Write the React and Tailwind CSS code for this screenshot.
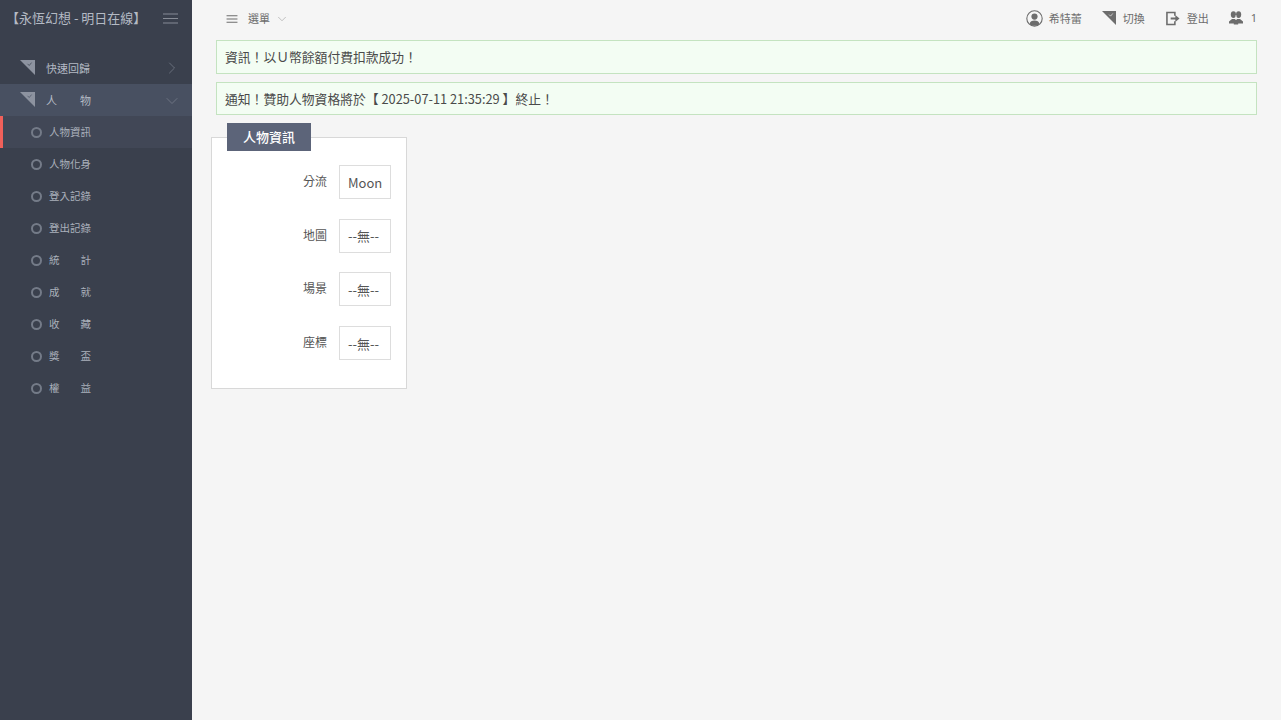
import React from 'react';
import { ChevronRight, ChevronDown } from 'lucide-react';

const FONT = "font-['Noto_Sans_CJK_TC','Noto_Sans',sans-serif]";

const subItems = [
  { a: '人物資訊', active: true },
  { a: '人物化身' },
  { a: '登入記錄' },
  { a: '登出記錄' },
  { a: '統', b: '計' },
  { a: '成', b: '就' },
  { a: '收', b: '藏' },
  { a: '獎', b: '盃' },
  { a: '權', b: '益' },
];

const fields = [
  { label: '分流', value: 'Moon' },
  { label: '地圖', value: '--無--' },
  { label: '場景', value: '--無--' },
  { label: '座標', value: '--無--' },
];

function CornerIcon({ color, tick, className }) {
  return (
    <svg viewBox="0 0 15 15" className={className}>
      <path d="M0 0H15V15Z" fill={color} />
      <path d="M7.5 3.8L9.2 5.5L11.6 2.6" fill="none" stroke={tick} strokeWidth="0.7" />
    </svg>
  );
}

function Bars({ className, stroke, width }) {
  return (
    <svg viewBox="0 0 15 11" className={className}>
      <path d="M0 1H15M0 5.5H15M0 10H15" fill="none" stroke={stroke} strokeWidth={width} />
    </svg>
  );
}

function Sidebar() {
  return (
    <aside className="w-[192px] shrink-0 bg-[#3a404d] flex flex-col">
      <div className="h-[52px] pl-[6px] pr-[14px] pb-[16px] flex items-center justify-between">
        <span className="text-[13px] text-[#b4bac4] whitespace-nowrap">【永恆幻想 - 明日在線】</span>
        <Bars className="w-[15px] h-[11px]" stroke="#9aa0aa" width="0.8" />
      </div>
      <div className="h-[32px] pl-[20px] pr-[10px] flex items-center text-[#b4bac4]">
        <CornerIcon color="#8d93a0" tick="#3a404d" className="w-[15px] h-[15px] -mt-[2px]" />
        <span className="ml-[11px] text-[11px] whitespace-nowrap">快速回歸</span>
        <ChevronRight size={20} strokeWidth={0.8} className="ml-auto text-[#7e8592]" />
      </div>
      <div className="h-[32px] pl-[20px] pr-[10px] flex items-center bg-[#485061] text-[#b4bac4]">
        <CornerIcon color="#8d93a0" tick="#485061" className="w-[15px] h-[15px] -mt-[2px]" />
        <span className="ml-[11px] w-[45px] text-[11px] flex justify-between">
          <span>人</span>
          <span>物</span>
        </span>
        <ChevronDown size={20} strokeWidth={0.8} className="ml-auto mt-[1px] text-[#7e8592]" />
      </div>
      {subItems.map((item) => (
        <div
          key={item.a}
          className={`h-[32px] flex items-center text-[#aab0bb] text-[10.5px] ${item.active ? 'bg-[#414756] border-l-[3px] border-[#f0605a] pl-[28px]' : 'pl-[31px]'}`}
        >
          <span className="w-[11px] h-[11px] rounded-full border-2 border-[#747b88] shrink-0" />
          <span className="ml-[7px] w-[42px] flex justify-between whitespace-nowrap">
            <span>{item.a}</span>
            {item.b && <span>{item.b}</span>}
          </span>
        </div>
      ))}
    </aside>
  );
}

function TopBar() {
  return (
    <div className="h-[40px] pl-[34px] pr-[24px] flex items-center justify-between text-[#6d6d6d] text-[11px]">
      <div className="flex items-center -mt-[3px]">
        <Bars className="w-[12px] h-[8px]" stroke="#6d6d6d" width="1.4" />
        <span className="ml-[10px]">選單</span>
        <ChevronDown size={14} strokeWidth={1} className="ml-[5px] text-[#999999]" />
      </div>
      <div className="flex items-center -mt-[3px]">
        <svg viewBox="0 0 17 17" className="w-[17px] h-[17px]">
          <circle cx="8.5" cy="8.5" r="7.7" fill="none" stroke="#6d6d6d" strokeWidth="1.1" />
          <circle cx="8.5" cy="6.6" r="3.1" fill="#6d6d6d" />
          <path d="M3.6 14.2C4 11.4 6 10.6 8.5 10.6S13 11.4 13.4 14.2C11 16.2 6 16.2 3.6 14.2Z" fill="#6d6d6d" />
        </svg>
        <span className="ml-[6px]">希特蕾</span>
        <CornerIcon color="#6d6d6d" tick="#f5f5f5" className="ml-[20px] w-[14px] h-[14px] -mt-[2px]" />
        <span className="ml-[7px]">切換</span>
        <svg viewBox="0 0 15 15" className="ml-[21px] w-[14px] h-[15px]">
          <path d="M9.5 4.5V1H1V14H9.5V10.5" fill="none" stroke="#6d6d6d" strokeWidth="1.7" />
          <path d="M5 6.5H10V3.8L14.5 7.5L10 11.2V8.5H5Z" fill="#6d6d6d" />
        </svg>
        <span className="ml-[7px]">登出</span>
        <svg viewBox="0 0 14 14" className="ml-[20px] w-[14px] h-[14px] -mt-[2px]">
          <ellipse cx="4.4" cy="3.6" rx="2.6" ry="3.4" fill="#6d6d6d" />
          <ellipse cx="9.6" cy="3.6" rx="2.6" ry="3.4" fill="#6d6d6d" />
          <path d="M0 12.5V10.5L3 8H5.8L7 9L8.2 8H11L14 10.5V12.5H9.2V13.5H4.8V12.5Z" fill="#6d6d6d" />
          <path d="M7 4V8.6" stroke="#f5f5f5" strokeWidth="0.6" />
        </svg>
        <span className="ml-[8px] font-['Noto_Sans']">1</span>
      </div>
    </div>
  );
}

function Notice({ children }) {
  return (
    <div className="h-[33.5px] px-[8px] flex items-center border border-[#c4e3c0] bg-[#f3fdf3] text-[12.8px] text-[#4a4a4a] whitespace-nowrap">
      {children}
    </div>
  );
}

function InfoPanel() {
  return (
    <div className="ml-[19px] mt-[8px] w-[196px]">
      <div className="relative z-10 ml-[16px] w-[84px] h-[28px] bg-[#5c6479] text-white text-[13px] font-medium flex items-center justify-center">
        人物資訊
      </div>
      <div className="-mt-[14px] h-[252px] bg-white border border-[#d8d8d8] pt-[27px] pr-[15px] flex flex-col gap-[19.67px]">
        {fields.map((f) => (
          <div key={f.label} className="flex items-center justify-end">
            <span className="text-[12px] text-[#555555] -mt-[2px]">{f.label}</span>
            <span className="ml-[12px] w-[52px] h-[34px] pl-[8px] pt-[1px] border border-[#dddddd] flex items-center text-[13px] text-[#555555]">
              {f.value}
            </span>
          </div>
        ))}
      </div>
    </div>
  );
}

export default function App() {
  return (
    <div className={`h-[720px] w-full flex overflow-hidden bg-[#f5f5f5] ${FONT}`}>
      <Sidebar />
      <main className="flex-1 min-w-0">
        <TopBar />
        <div className="mx-[24px] flex flex-col gap-[8px]">
          <Notice>資訊！以Ｕ幣餘額付費扣款成功！</Notice>
          <Notice>通知！贊助人物資格將於【 2025-07-11 21:35:29 】終止！</Notice>
        </div>
        <InfoPanel />
      </main>
    </div>
  );
}
